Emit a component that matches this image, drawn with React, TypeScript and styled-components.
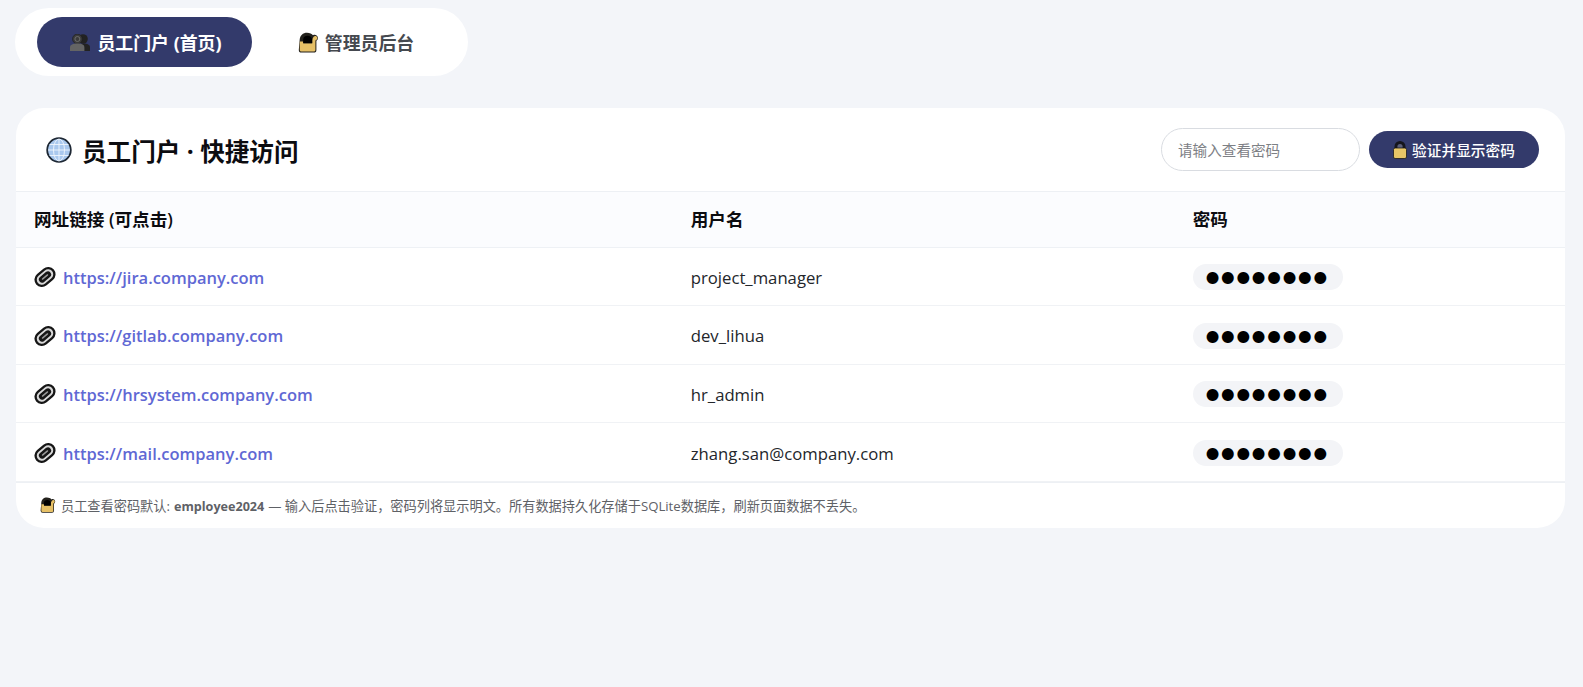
import styled, { createGlobalStyle } from 'styled-components';

const GlobalStyle = createGlobalStyle`
  html, body {
    margin: 0;
    padding: 0;
    background: #f3f5f9;
    font-family: "Open Sans", "Noto Sans CJK SC", sans-serif;
  }

  svg {
    flex-shrink: 0;
  }
`;

const Page = styled.div`
  padding: 8px 18px 0 16px;
  height: 679px;
  overflow: hidden;
`;

const Nav = styled.nav`
  display: inline-flex;
  align-items: center;
  gap: 8px;
  width: 453px;
  height: 68px;
  box-sizing: border-box;
  margin-left: -1px;
  padding: 0 0 0 22px;
  background: #fff;
  border-radius: 34px;
`;

const NavTab = styled.a<{ $active?: boolean }>`
  display: flex;
  flex-shrink: 0;
  align-items: center;
  justify-content: center;
  gap: ${(p) => (p.$active ? '7px' : '6px')};
  width: ${(p) => (p.$active ? '215px' : '192px')};
  height: 50px;
  box-sizing: border-box;
  padding-left: ${(p) => (p.$active ? '3px' : '0')};
  border-radius: 25px;
  font-size: 17.9px;
  font-weight: ${(p) => (p.$active ? 700 : 600)};
  color: ${(p) => (p.$active ? '#fff' : '#45494f')};
  background: ${(p) => (p.$active ? '#333a6b' : 'transparent')};
`;

const Card = styled.section`
  margin-top: 32px;
  background: #fff;
  border-radius: 28px;
  overflow: hidden;
`;

const CardHeader = styled.header`
  display: flex;
  align-items: center;
  justify-content: space-between;
  height: 84px;
  box-sizing: border-box;
  padding: 0 26px 0 30px;
  border-bottom: 1px solid #edf0f4;
`;

const Title = styled.h2`
  display: flex;
  align-items: center;
  gap: 10px;
  margin: 0;
  font-size: 24.6px;
  font-weight: 700;
  color: #0c0c10;
`;

const Verify = styled.div`
  display: flex;
  align-items: center;
  gap: 9px;
`;

const PasswordInput = styled.input`
  width: 199px;
  height: 43px;
  box-sizing: border-box;
  padding: 0 16px;
  border: 1px solid #d9dce1;
  border-radius: 22px;
  outline: none;
  background: #fff;
  font-family: inherit;
  font-size: 14.6px;

  &::placeholder {
    color: #7d8085;
    opacity: 1;
  }
`;

const VerifyButton = styled.button`
  display: flex;
  align-items: center;
  justify-content: center;
  gap: 5px;
  width: 170px;
  height: 37px;
  padding: 0;
  border: none;
  border-radius: 19px;
  background: #333a6b;
  color: #fff;
  font-family: inherit;
  font-size: 14.7px;
  font-weight: 500;
`;

const Table = styled.table`
  width: 100%;
  border-collapse: collapse;
  table-layout: fixed;
`;

const HeadCell = styled.th<{ $width: string }>`
  width: ${(p) => p.$width};
  height: 55px;
  padding: 0 18px 2px;
  box-sizing: border-box;
  background: #fbfcfe;
  border-bottom: 1px solid #eef1f5;
  text-align: left;
  font-size: 17.6px;
  font-weight: 600;
  color: #0c0c10;
`;

const Row = styled.tr`
  height: 58.6px;
  border-bottom: 1px solid #f0f2f5;
`;

const Cell = styled.td`
  padding: 2px 18px 0;
  font-size: 16.7px;
  color: #23262b;
`;

const LinkWrap = styled.span`
  display: flex;
  align-items: center;
  gap: 7px;
`;

const SiteLink = styled.a`
  color: #5f68d4;
  font-size: 16.5px;
  font-weight: 600;
  text-decoration: none;
`;

const Masked = styled.span`
  display: inline-flex;
  align-items: center;
  width: 150px;
  height: 26px;
  box-sizing: border-box;
  padding-left: 13px;
  border-radius: 13px;
  background: #f3f4f7;
  color: #000;
  font-family: "DejaVu Sans", sans-serif;
  font-size: 15.6px;
  letter-spacing: 1.8px;
  white-space: nowrap;
`;

const Footer = styled.footer`
  display: flex;
  align-items: center;
  gap: 5px;
  height: 45px;
  padding-left: 24px;
  border-top: 1px solid #edf0f4;
  font-size: 13.2px;
  color: #5e6166;

  strong {
    font-size: 12.6px;
    font-weight: 700;
    margin: 0 4px;
  }
`;

const Lock = ({ size = 21 }: { size?: number }) => (
  <svg width={size} height={size} viewBox="0 0 21 21">
    <path d="M1.6 8.5C1.8 3.4 5 .8 9 .8c2.8 0 4.8 1 6 2.4 1.2-.7 2.6-.6 3.6.2 1.6 1.2 1.8 3.4.4 4.8l-.6.6V18a2.6 2.6 0 0 1-2.6 2.6H3.4A2.6 2.6 0 0 1 .8 18z" fill="#23211c" />
    <path d="M1.8 9.6h3.4v2h9V7.4l1.4-2.6c.9-.9 2-1 2.9-.4 1 .7 1.1 2 .3 3L17.4 8.6V18a1.6 1.6 0 0 1-1.6 1.6H3.4A1.6 1.6 0 0 1 1.8 18z" fill="#e6c066" />
    <path d="M5.2 11V7.4C5.2 5.2 7 3.8 9.6 3.8c2.4 0 4.2 1.4 4.6 3.4V11z" fill="#000" />
  </svg>
);

const Padlock = () => (
  <svg width="14" height="19" viewBox="0 0 14 19">
    <path d="M1.5 10V6.4a5.5 5.5 0 0 1 11 0V10z" fill="#15151c" />
    <path d="M4.4 8V6.6a2.6 2.6 0 0 1 5.2 0V8z" fill="#5b5e78" />
    <rect x="0.5" y="8" width="13" height="10.5" rx="1.6" fill="#e8c667" stroke="#1a1a1a" strokeWidth="0.8" />
  </svg>
);

const People = () => (
  <svg width="20" height="17" viewBox="0 0 20 17">
    <circle cx="13" cy="5" r="4.8" fill="#222" />
    <path d="M9 17v-3.6C9 10.8 11 9.6 14 9.6s6 1.2 6 3.8V17z" fill="#222" />
    <circle cx="7.4" cy="5" r="4.9" fill="#3a3a3a" stroke="#1c1c1c" strokeWidth="0.6" />
    <circle cx="7.4" cy="5" r="2.5" fill="none" stroke="#777" strokeWidth="0.8" />
    <path d="M0 17v-3.6C0 10.8 3 9.6 7.4 9.6s7 1.2 7 3.8V17z" fill="#646464" />
  </svg>
);

const Globe = () => (
  <svg width="26" height="26" viewBox="0 0 26 26">
    <circle cx="13" cy="13" r="11.8" fill="#a9c8ee" stroke="#1d2733" strokeWidth="1.8" />
    <g fill="none" stroke="#eef5fd" strokeWidth="0.9">
      <ellipse cx="13" cy="13" rx="5.5" ry="11" />
      <path d="M13 2v22M2 13h22M3.5 7.5h19M3.5 18.5h19" />
    </g>
  </svg>
);

const ChainLink = () => (
  <svg width="22" height="22" viewBox="0 0 22 22">
    <g transform="rotate(-40 11 11)">
      <rect x="-0.5" y="3.6" width="23" height="14.8" rx="7.4" fill="#161616" />
      <rect x="1.8" y="5.9" width="18.4" height="10.2" rx="5.1" fill="#d8d8d8" />
      <rect x="4" y="7.8" width="14" height="6.4" rx="3.2" fill="#161616" />
      <rect x="7" y="10.3" width="8" height="1.4" rx="0.7" fill="#9a9a9a" />
    </g>
  </svg>
);

const accounts = [
  { url: 'https://jira.company.com', user: 'project_manager' },
  { url: 'https://gitlab.company.com', user: 'dev_lihua' },
  { url: 'https://hrsystem.company.com', user: 'hr_admin' },
  { url: 'https://mail.company.com', user: 'zhang.san@company.com' },
];

function App() {
  return (
    <Page>
      <GlobalStyle />
      <Nav>
        <NavTab $active>
          <People />
          员工门户 (首页)
        </NavTab>
        <NavTab>
          <Lock />
          管理员后台
        </NavTab>
      </Nav>
      <Card>
        <CardHeader>
          <Title>
            <Globe />
            员工门户 · 快捷访问
          </Title>
          <Verify>
            <PasswordInput type="password" placeholder="请输入查看密码" />
            <VerifyButton>
              <Padlock />
              验证并显示密码
            </VerifyButton>
          </Verify>
        </CardHeader>
        <Table>
          <thead>
            <tr>
              <HeadCell $width="42.4%">网址链接 (可点击)</HeadCell>
              <HeadCell $width="32.4%">用户名</HeadCell>
              <HeadCell $width="25.2%">密码</HeadCell>
            </tr>
          </thead>
          <tbody>
            {accounts.map((a) => (
              <Row key={a.url}>
                <Cell>
                  <LinkWrap>
                    <ChainLink />
                    <SiteLink href="#">{a.url}</SiteLink>
                  </LinkWrap>
                </Cell>
                <Cell>{a.user}</Cell>
                <Cell>
                  <Masked>●●●●●●●●</Masked>
                </Cell>
              </Row>
            ))}
          </tbody>
        </Table>
        <Footer>
          <Lock size={16} />
          <span>
            员工查看密码默认:<strong>employee2024</strong>— 输入后点击验证，密码列将显示明文。所有数据持久化存储于SQLite数据库，刷新页面数据不丢失。
          </span>
        </Footer>
      </Card>
    </Page>
  );
}

export default App;
